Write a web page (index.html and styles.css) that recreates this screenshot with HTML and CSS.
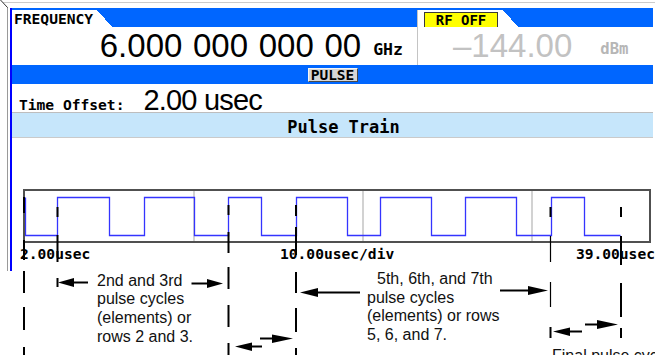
FILE: index.html
```html
<!DOCTYPE html>
<html lang="en">
<head>
<meta charset="utf-8">
<title>Pulse Train</title>
<link rel="stylesheet" href="styles.css">
</head>
<body>
<div class="bezel">
  <div class="case">
    <div class="screen">
      <div class="hdr">
        <div class="panel freq">
          <div class="tab"><span class="tab-label">FREQUENCY</span></div>
          <div class="panel-body">
            <span class="big">6.000 000 000 00</span>
            <span class="unit">GHz</span>
          </div>
        </div>
        <div class="sep"></div>
        <div class="panel amp">
          <div class="tab"><span class="rfoff">RF OFF</span></div>
          <div class="panel-body">
            <span class="big">–144.00</span>
            <span class="unit">dBm</span>
          </div>
        </div>
      </div>
      <div class="status"><span class="btn">PULSE</span></div>
      <div class="offset">
        <span class="lbl">Time Offset:</span>
        <span class="val">2.00 usec</span>
      </div>
      <div class="title">Pulse Train</div>
      <div class="plot">
        <div class="graph">
          <svg class="wave" width="624" height="50" viewBox="25 191 624 50">
            <g stroke="#d2d2d2" stroke-width="2">
              <line x1="194" y1="191" x2="194" y2="241"/>
              <line x1="363" y1="191" x2="363" y2="241"/>
              <line x1="532" y1="191" x2="532" y2="241"/>
            </g>
            <polyline fill="none" stroke="#3434ff" stroke-width="1.3"
              points="25.5,197.5 25.5,235.5 57.5,235.5 57.5,197.5 109.5,197.5 109.5,235.5 144.5,235.5 144.5,197.5 194.5,197.5 194.5,235.5 228.5,235.5 228.5,197.5 261.5,197.5 261.5,235.5 296.5,235.5 296.5,197.5 347.5,197.5 347.5,235.5 380.5,235.5 380.5,197.5 431.5,197.5 431.5,235.5 465.5,235.5 465.5,197.5 516.5,197.5 516.5,235.5 551.5,235.5 551.5,197.5 584.5,197.5 584.5,235.5 620.5,235.5"/>
          </svg>
        </div>
        <div class="axis">
          <span class="ax1">2.00usec</span>
          <span class="ax2">10.00usec/div</span>
          <span class="ax3">39.00usec</span>
        </div>
      </div>
    </div>
  </div>
</div>

<svg class="overlay" width="655" height="355" viewBox="0 0 655 355">
  <line x1="0.5" y1="0" x2="7.5" y2="7.5" stroke="#333" stroke-width="1"/>
  <g stroke="#000" stroke-width="2">
    <line x1="24" y1="197" x2="24" y2="213"/>
    <line x1="24" y1="240" x2="24" y2="260"/>
    <line x1="24" y1="271" x2="24" y2="293"/>
    <line x1="24" y1="307" x2="24" y2="330"/>
    <line x1="24" y1="347" x2="24" y2="356"/>

    <line x1="57.5" y1="207" x2="57.5" y2="217"/>
    <line x1="57.5" y1="235" x2="57.5" y2="262"/>
    <line x1="57.5" y1="278" x2="57.5" y2="287"/>

    <line x1="228.5" y1="205" x2="228.5" y2="215"/>
    <line x1="228.5" y1="232" x2="228.5" y2="253"/>
    <line x1="228.5" y1="267" x2="228.5" y2="289"/>
    <line x1="228.5" y1="305" x2="228.5" y2="327"/>
    <line x1="228.5" y1="343" x2="228.5" y2="356"/>

    <line x1="296" y1="205" x2="296" y2="216"/>
    <line x1="296" y1="227" x2="296" y2="255"/>
    <line x1="296" y1="272" x2="296" y2="293"/>
    <line x1="296" y1="308" x2="296" y2="332"/>
    <line x1="296" y1="348" x2="296" y2="356"/>

    <line x1="550.5" y1="207" x2="550.5" y2="217"/>
    <line x1="550.5" y1="236" x2="550.5" y2="262" stroke-width="1.2"/>
    <line x1="550.5" y1="282" x2="550.5" y2="307" stroke-width="1.2"/>
    <line x1="550.5" y1="327" x2="550.5" y2="338"/>

    <line x1="621" y1="207" x2="621" y2="217"/>
    <line x1="621" y1="236" x2="621" y2="265"/>
    <line x1="621" y1="283" x2="621" y2="317"/>
    <line x1="621" y1="328" x2="621" y2="338"/>

    <line x1="73" y1="282.5" x2="88" y2="282.5"/>
    <line x1="191.5" y1="283.5" x2="208" y2="283.5"/>
    <line x1="317" y1="292.5" x2="360" y2="292.5"/>
    <line x1="500" y1="290.5" x2="529" y2="290.5"/>
    <line x1="251" y1="346.5" x2="262" y2="346.5"/>
    <line x1="260" y1="338.5" x2="273" y2="338.5"/>
    <line x1="569" y1="331.5" x2="582" y2="331.5"/>
    <line x1="585" y1="324.5" x2="598" y2="324.5"/>
  </g>
  <g fill="#000">
    <polygon points="58,282.5 74,278 74,287"/>
    <polygon points="223,283.5 207,279 207,288"/>
    <polygon points="300,292.5 318,288 318,297"/>
    <polygon points="548,290.5 528,286 528,295"/>
    <polygon points="235,346.5 252,342.5 252,351"/>
    <polygon points="293,338.5 272,334.5 272,343"/>
    <polygon points="553,331.5 570,327.5 570,336"/>
    <polygon points="618,324.5 597,320 597,329"/>
  </g>
</svg>

<div class="note n1">2nd and 3rd<br>pulse cycles<br>(elements) or<br>rows 2 and 3.</div>
<div class="note n2"><span class="first">5th, 6th, and 7th</span><br>pulse cycles<br>(elements) or rows<br>5, 6, and 7.</div>
<div class="note n3">Final pulse cycle</div>
</body>
</html>
```
FILE: styles.css
```css
* { box-sizing: border-box; }
html, body { margin: 0; padding: 0; }
body {
  position: relative;
  width: 655px;
  height: 355px;
  overflow: hidden;
  background: #fff;
  color: #000;
  font-family: "Liberation Sans", Arial, sans-serif;
}

.bezel {
  margin: 2px 0 0 3px;
  border-top: 1px solid #cbcbcb;
  padding: 4px 0 0 4px;
}
.case {
  border-left: 1px solid #9a9a9a;
  padding: 1px 0 0 2px;
  height: 264px;
}
.screen {
  border-left: 2px solid #0000ff;
  width: 643px;
  height: 263px;
  display: flex;
  flex-direction: column;
}

/* header */
.hdr {
  height: 57px;
  flex: none;
  background: #0066ff;
  padding-top: 2px;
  display: grid;
  grid-template-columns: 405px 1px 1fr;
}
.sep { background: #c4c4c4; }
.panel { display: flex; flex-direction: column; }
.tab {
  height: 17px;
  width: 100px;
  flex: none;
  background:
    linear-gradient(#fff, #fff) 0 0 / 85px 100% no-repeat,
    linear-gradient(to top right, #fff 50%, transparent 50%) 85px 0 / 15px 100% no-repeat;
}
.tab-label {
  display: block;
  padding-left: 2px;
  font: bold 14.6px/17px "DejaVu Sans Mono", monospace;
}
.rfoff {
  display: inline-block;
  margin: 2px 0 0 6px;
  width: 74px;
  height: 16px;
  background: #ffff00;
  border: 1px solid #3a3a3a;
  font: bold 14px/14px "DejaVu Sans Mono", monospace;
  text-align: center;
  white-space: pre;
}
.panel-body {
  flex: 1;
  background: #fff;
  display: flex;
  align-items: flex-start;
  white-space: nowrap;
}
.big {
  font-size: 33px;
  line-height: 33px;
  margin-top: 2px;
}
.unit {
  font: bold 16.5px/17px "DejaVu Sans Mono", monospace;
  margin: 14px 0 0 12px;
}
.freq .panel-body { justify-content: flex-end; padding-right: 14px; }
.freq .big { word-spacing: 1.5px; }
.amp .panel-body { padding-left: 35px; }
.amp .big { color: #c2c2c2; }
.amp .unit { color: #b6b6b6; font-size: 15.6px; margin: 14px 0 0 28px; }

/* status bar */
.status {
  height: 19px;
  flex: none;
  background: #0066ff;
  display: flex;
  justify-content: center;
  align-items: center;
}
.btn {
  width: 50px;
  height: 14px;
  background: #d6d6d6;
  border: 1px solid;
  border-color: #f6f6f6 #4a4a4a #4a4a4a #f6f6f6;
  font: bold 14.5px/13px "DejaVu Sans Mono", monospace;
  text-align: center;
}

/* time offset */
.offset {
  height: 28px;
  flex: none;
  display: flex;
  align-items: baseline;
  padding: 3px 0 0 7px;
  white-space: nowrap;
}
.lbl { font: bold 14.6px/26px "DejaVu Sans Mono", monospace; }
.val {
  font-size: 29px;
  line-height: 26px;
  letter-spacing: -0.8px;
  margin-left: 19px;
}

/* title */
.title {
  height: 26px;
  flex: none;
  border-top: 1px solid #bdbdbd;
  border-bottom: 1px solid #cacaca;
  background: #c6e6fb;
  padding: 3px 0 0 22px;
  text-align: center;
  font: bold 17px/22px "DejaVu Sans Mono", monospace;
}

/* plot */
.plot {
  flex: 1;
  padding: 51px 0 0 11px;
}
.graph {
  width: 628px;
  height: 54px;
  border: 2px solid #505050;
}
.wave { display: block; }
.axis {
  display: flex;
  margin: 2.5px 0 0 -3px;
  font: bold 14.6px/15px "DejaVu Sans Mono", monospace;
  white-space: nowrap;
}
.axis span { flex: none; }
.ax2 { margin-left: 189.7px; }
.ax3 { margin-left: 181.7px; }

/* annotations */
.overlay {
  position: absolute;
  left: 0;
  top: 0;
  pointer-events: none;
}
.note {
  position: absolute;
  font: 16px/18.7px "Liberation Sans", Arial, sans-serif;
  color: #111;
  white-space: nowrap;
}
.n1 { left: 97px; top: 271.5px; }
.n2 { left: 367px; top: 270px; line-height: 18.5px; }
.n2 .first { padding-left: 10px; }
.n3 { left: 552px; top: 346.5px; }
```
